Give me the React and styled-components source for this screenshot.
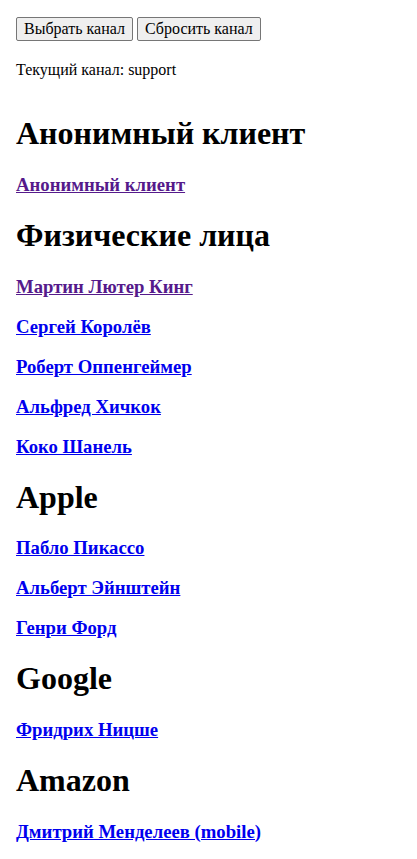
import React from "react";
import styled, { createGlobalStyle } from "styled-components";

const Global = createGlobalStyle`
  body {
    margin: 8px;
    font-family: "Liberation Serif", "Times New Roman", serif;
    font-size: 16px;
    color: #000;
    background: #fff;
  }
`;

const Page = styled.div`
  padding: 8px;
  display: flex;
  flex-direction: column;
`;

const Toolbar = styled.div`
  display: flex;
  gap: 4px;
  padding: 1px 0 4px;
`;

const Button = styled.button`
  font-family: "Liberation Serif", "Times New Roman", serif;
  font-size: 16px;
  line-height: 18px;
  padding: 2px 7px;
  background: #efefef;
  border: 1px solid #767676;
  border-radius: 2px;
  color: #000;
`;

const Status = styled.p`
  margin: 16px 0 15px;
  line-height: 18px;
`;

const Groups = styled.div`
  display: flow-root;
`;

const GroupTitle = styled.h1`
  font-size: 32px;
  line-height: 37.4px;
  font-weight: bold;
  margin: 21.44px 0;
`;

const Item = styled.h3`
  font-size: 18.72px;
  line-height: 21.28px;
  font-weight: bold;
  margin: 18.72px 0;
`;

const Link = styled.a`
  color: ${(p) => (p.$visited ? "#551A8B" : "#0000EE")};
  text-decoration: underline;
`;

const groups = [
  { title: "Анонимный клиент", items: [{ name: "Анонимный клиент", visited: true }] },
  {
    title: "Физические лица",
    items: [
      { name: "Мартин Лютер Кинг", visited: true },
      { name: "Сергей Королёв" },
      { name: "Роберт Оппенгеймер" },
      { name: "Альфред Хичкок" },
      { name: "Коко Шанель" },
    ],
  },
  {
    title: "Apple",
    items: [{ name: "Пабло Пикассо" }, { name: "Альберт Эйнштейн" }, { name: "Генри Форд" }],
  },
  { title: "Google", items: [{ name: "Фридрих Ницше" }] },
  { title: "Amazon", items: [{ name: "Дмитрий Менделеев (mobile)" }] },
];

export default function App() {
  return (
    <>
      <Global />
      <Page>
        <Toolbar>
          <Button>Выбрать канал</Button>
          <Button>Сбросить канал</Button>
        </Toolbar>
        <Status>Текущий канал: support</Status>
        <Groups>
          {groups.map((g) => (
            <React.Fragment key={g.title}>
              <GroupTitle>{g.title}</GroupTitle>
              {g.items.map((it) => (
                <Item key={it.name}>
                  <Link href="#" $visited={it.visited}>
                    {it.name}
                  </Link>
                </Item>
              ))}
            </React.Fragment>
          ))}
        </Groups>
      </Page>
    </>
  );
}
